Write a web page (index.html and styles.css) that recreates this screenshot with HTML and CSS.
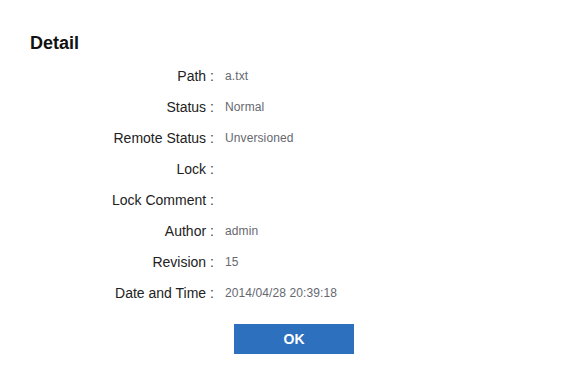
FILE: index.html
```html
<!DOCTYPE html>
<html>
<head>
<meta charset="utf-8">
<link rel="stylesheet" href="styles.css">
</head>
<body>
<div class="dialog">
  <h1 class="title">Detail</h1>
  <div class="rows">
    <div class="label">Path<span class="colon">:</span></div><div class="value">a.txt</div>
    <div class="label">Status<span class="colon">:</span></div><div class="value">Normal</div>
    <div class="label">Remote Status<span class="colon">:</span></div><div class="value">Unversioned</div>
    <div class="label">Lock<span class="colon">:</span></div><div class="value"></div>
    <div class="label">Lock Comment<span class="colon">:</span></div><div class="value"></div>
    <div class="label">Author<span class="colon">:</span></div><div class="value">admin</div>
    <div class="label">Revision<span class="colon">:</span></div><div class="value">15</div>
    <div class="label">Date and Time<span class="colon">:</span></div><div class="value">2014/04/28 20:39:18</div>
  </div>
  <div class="actions">
    <button class="ok">OK</button>
  </div>
</div>
</body>
</html>
```
FILE: styles.css
```css
html, body {
  margin: 0;
  padding: 0;
  background: #ffffff;
  font-family: "Liberation Sans", Arial, sans-serif;
}
.dialog {
  width: 588px;
  height: 383px;
  box-sizing: border-box;
  padding-top: 32px;
}
.title {
  margin: 0 0 6px 30px;
  font-size: 18px;
  line-height: 22px;
  font-weight: bold;
  color: #111;
}
.rows {
  display: grid;
  grid-template-columns: 214px 1fr;
  column-gap: 11px;
  grid-auto-rows: 31px;
  align-items: center;
}
.label {
  text-align: right;
  font-size: 14px;
  color: #222;
  white-space: nowrap;
}
.colon {
  margin-left: 4px;
  color: #444;
}
.value {
  font-size: 12px;
  color: #666870;
  letter-spacing: 0.1px;
}
.actions {
  display: flex;
  justify-content: center;
  margin-top: 16px;
}
.ok {
  width: 120px;
  height: 30px;
  border: none;
  background: #2d70bd;
  color: #fff;
  font-family: "Liberation Sans", Arial, sans-serif;
  font-weight: bold;
  font-size: 14px;
  padding: 0;
}
```
